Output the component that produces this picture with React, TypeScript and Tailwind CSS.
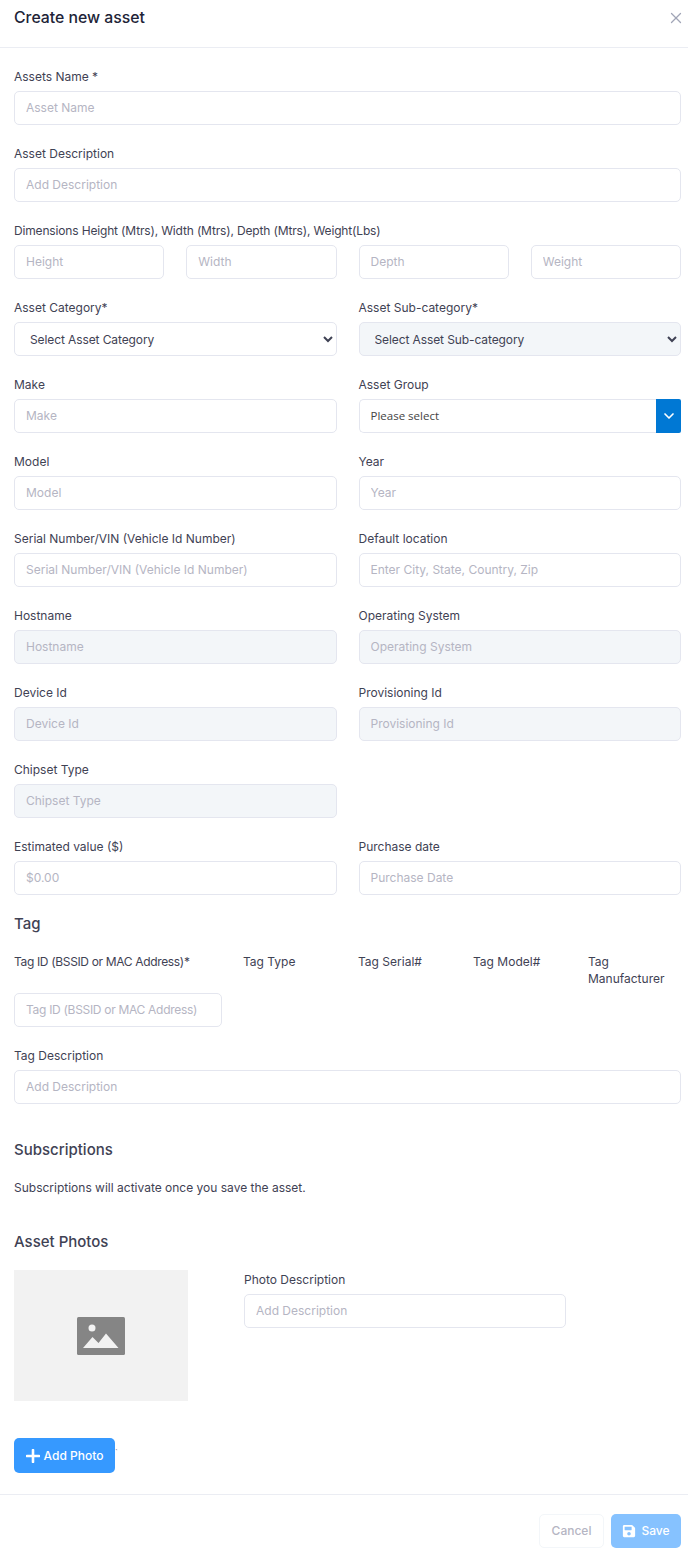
import { ChevronDown, X } from "lucide-react";
import { FaSave } from "react-icons/fa";

const inputClass =
    "block w-full h-[34px] rounded-[5px] border border-[#e4e6ef] px-[11px] pb-[2px] text-[12px] text-[#3f4254] placeholder:text-[#b5b5c3] outline-none";

const labelClass = "block h-[18px] mb-[6px] text-[12px] leading-[20px] text-[#3f4254]";

function Field({ label, placeholder, disabled }: { label: string; placeholder: string; disabled?: boolean }) {
    return (
        <div>
            <label className={labelClass}>{label}</label>
            <input
                placeholder={placeholder}
                disabled={disabled}
                className={inputClass + (disabled ? " bg-[#f3f6f9]" : " bg-white")}
            />
        </div>
    );
}

function SelectField({ label, placeholder, muted }: { label: string; placeholder: string; muted?: boolean }) {
    return (
        <div>
            <label className={labelClass}>{label}</label>
            <select
                className={
                    "block w-full h-[34px] rounded-[5px] border border-[#e4e6ef] pl-[11px] text-[12px] tracking-[-0.1px] text-[#3f4254] outline-none appearance-auto " +
                    (muted ? "bg-[#f3f6f9]" : "bg-white")
                }
            >
                <option>{placeholder}</option>
            </select>
        </div>
    );
}

function SectionTitle({ children }: { children: string }) {
    return <h3 className="text-[15px] leading-[24px] font-medium text-[#3f4254]">{children}</h3>;
}

export default function App() {
    return (
        <div className="w-[688px] h-[1557px] bg-white font-['Inter',sans-serif] overflow-hidden">
            <header className="h-[48px] border-b border-[#ebedf3] pl-[14px] pr-[3px] flex items-start justify-between">
                <h2 className="mt-[6px] text-[15.8px] leading-[24px] font-medium text-[#212337]">Create new asset</h2>
                <X className="mt-[9px] w-[18px] h-[18px] text-[#a1a5b7]" strokeWidth={1.75} />
            </header>

            <div className="pl-[14px] pr-[7px] pt-[19px]">
                <div className="flex flex-col gap-[19px]">
                    <Field label="Assets Name *" placeholder="Asset Name" />
                    <Field label="Asset Description" placeholder="Add Description" />

                    <div>
                        <label className={labelClass + " tracking-[-0.16px]"}>
                            Dimensions Height (Mtrs), Width (Mtrs), Depth (Mtrs), Weight(Lbs)
                        </label>
                        <div className="grid grid-cols-4 gap-x-[22px]">
                            <input placeholder="Height" className={inputClass} />
                            <input placeholder="Width" className={inputClass} />
                            <input placeholder="Depth" className={inputClass} />
                            <input placeholder="Weight" className={inputClass} />
                        </div>
                    </div>

                    <div className="grid grid-cols-2 gap-x-[22px] gap-y-[19px]">
                        <SelectField label="Asset Category*" placeholder="Select Asset Category" />
                        <SelectField label="Asset Sub-category*" placeholder="Select Asset Sub-category" muted />

                        <Field label="Make" placeholder="Make" />
                        <div>
                            <label className={labelClass}>Asset Group</label>
                            <div className="flex h-[34px]">
                                <div className="flex-1 rounded-l-[5px] border border-r-0 border-[#e4e6ef] pl-[11px] flex items-center text-[11.5px] font-['Open_Sans',sans-serif] text-[#444]">
                                    Please select
                                </div>
                                <div className="w-[25px] rounded-r-[2px] bg-[#0078d4] flex items-center justify-center">
                                    <ChevronDown className="w-[16px] h-[16px] text-white" strokeWidth={2.5} />
                                </div>
                            </div>
                        </div>

                        <Field label="Model" placeholder="Model" />
                        <Field label="Year" placeholder="Year" />
                        <Field label="Serial Number/VIN (Vehicle Id Number)" placeholder="Serial Number/VIN (Vehicle Id Number)" />
                        <Field label="Default location" placeholder="Enter City, State, Country, Zip" />
                        <Field label="Hostname" placeholder="Hostname" disabled />
                        <Field label="Operating System" placeholder="Operating System" disabled />
                        <Field label="Device Id" placeholder="Device Id" disabled />
                        <Field label="Provisioning Id" placeholder="Provisioning Id" disabled />
                        <Field label="Chipset Type" placeholder="Chipset Type" disabled />
                        <div />
                        <Field label="Estimated value ($)" placeholder="$0.00" />
                        <Field label="Purchase date" placeholder="Purchase Date" />
                    </div>
                </div>

                <div className="mt-[17px]">
                    <SectionTitle>Tag</SectionTitle>
                </div>
                <div className="mt-[17px] grid grid-cols-[229px_115px_115px_115px_1fr] text-[12px] leading-[17px] text-[#3f4254]">
                    <span className="tracking-[-0.34px]">Tag ID (BSSID or MAC Address)*</span>
                    <span>Tag Type</span>
                    <span>Tag Serial#</span>
                    <span>Tag Model#</span>
                    <span>Tag Manufacturer</span>
                </div>
                <input
                    placeholder="Tag ID (BSSID or MAC Address)"
                    className={inputClass + " mt-[6px] !w-[208px] placeholder:tracking-[-0.3px]"}
                />
                <div className="mt-[19px]">
                    <Field label="Tag Description" placeholder="Add Description" />
                </div>

                <div className="mt-[34px]">
                    <SectionTitle>Subscriptions</SectionTitle>
                </div>
                <p className="mt-[17px] text-[12px] leading-[18px] text-[#3f4254]">Subscriptions will activate once you save the asset.</p>

                <div className="mt-[33px]">
                    <SectionTitle>Asset Photos</SectionTitle>
                </div>
                <div className="mt-[16px] flex">
                    <div className="w-[174px] h-[131px] bg-[#f2f2f2] flex items-center justify-center">
                        <svg viewBox="0 0 48 38" className="w-[48px] h-[38px]">
                            <rect width="48" height="38" rx="1.5" fill="#858585" />
                            <circle cx="15" cy="11" r="3.5" fill="#f2f2f2" />
                            <path d="M6 31 L15.5 20 L21.5 26 L29 16.5 L41.5 31 Z" fill="#f2f2f2" />
                        </svg>
                    </div>
                    <div className="ml-[56px] w-[322px]">
                        <Field label="Photo Description" placeholder="Add Description" />
                    </div>
                </div>

                <div className="mt-[37px] flex items-start">
                    <button className="w-[101px] h-[35px] rounded-[5px] bg-[#3699ff] flex items-center justify-center gap-[4px] text-[12px] font-medium text-white">
                        <svg viewBox="0 0 14 14" className="w-[14px] h-[14px]">
                            <path d="M7 1 V13 M1 7 H13" stroke="white" strokeWidth="2.6" strokeLinecap="round" />
                        </svg>
                        Add Photo
                    </button>
                    <span className="mt-[6px] text-[9px] leading-[18px] text-[#7e8299]">`</span>
                </div>
            </div>

            <footer className="mt-[21px] border-t border-[#ebedf3] pt-[19px] pr-[7px] flex justify-end gap-[7px]">
                <button className="w-[65px] h-[34px] rounded-[5px] border border-[#f3f6f9] bg-white text-[12px] font-medium text-[#b5b5c3]">
                    Cancel
                </button>
                <button className="w-[70px] h-[34px] rounded-[5px] bg-[#86c2ff] flex items-center justify-center gap-[5px] text-[12px] font-medium text-white">
                    <FaSave className="w-[14px] h-[14px]" />
                    Save
                </button>
            </footer>
        </div>
    );
}
